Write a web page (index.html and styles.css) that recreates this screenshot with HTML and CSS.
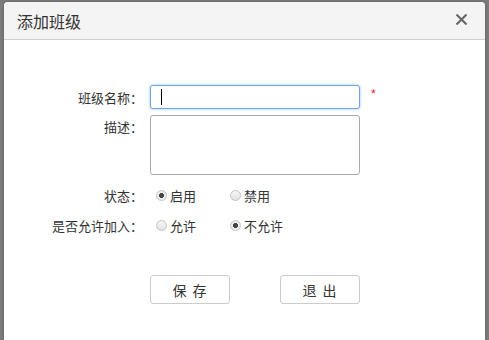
FILE: index.html
```html
<!DOCTYPE html>
<html lang="zh-CN">
<head>
    <meta charset="UTF-8">
    <title>添加班级</title>
    <link rel="stylesheet" href="styles.css">
</head>
<body>
    <div class="dialog">
        <header class="dialog-header">
            <h1>添加班级</h1>
            <span class="close">
                <svg width="11" height="11" viewBox="0 0 11 11"><path d="M1.2 1.2 L9.8 9.8 M9.8 1.2 L1.2 9.8" stroke="#666" stroke-width="2.1" stroke-linecap="square"/></svg>
            </span>
        </header>

        <form class="form">
            <div class="row">
                <label class="label" for="className">班级名称：</label>
                <div class="field caret">
                    <input type="text" id="className" class="input">
                </div>
                <span class="required">*</span>
            </div>

            <div class="row row-top">
                <label class="label" for="desc">描述：</label>
                <textarea id="desc" class="textarea"></textarea>
            </div>

            <div class="row row-radio">
                <span class="label">状态：</span>
                <label class="option"><input type="radio" name="status" checked>启用</label>
                <label class="option"><input type="radio" name="status">禁用</label>
            </div>

            <div class="row row-radio">
                <span class="label">是否允许加入：</span>
                <label class="option"><input type="radio" name="join">允许</label>
                <label class="option"><input type="radio" name="join" checked>不允许</label>
            </div>

            <div class="buttons">
                <button type="button">保 存</button>
                <button type="button">退 出</button>
            </div>
        </form>
    </div>
</body>
</html>
```

FILE: styles.css
```css
/* 页面与遮罩 */
html, body {
    height: 100%;
    overflow: hidden;
}

body {
    margin: 0;
    padding: 2px 0 0 4px;
    box-sizing: border-box;
    background-color: #7b7b7b;
    font-family: "Liberation Sans", "Noto Sans CJK SC", sans-serif;
    font-size: 13px;
    color: #333333;
}

/* 对话框 */
.dialog {
    width: 481px;
    height: 338px;
    background-color: #ffffff;
    border-radius: 4px 4px 0 0;
    box-shadow: 0 0 3px rgba(0, 0, 0, 0.3);
}

.dialog-header {
    height: 37px;
    display: flex;
    align-items: center;
    justify-content: space-between;
    padding: 0 18px 0 13px;
    background-color: #f4f4f4;
    border-bottom: 1px solid #cfcfcf;
    border-radius: 4px 4px 0 0;
}

.dialog-header h1 {
    margin: 0;
    font-size: 16px;
    font-weight: normal;
    color: #333333;
}

.close {
    display: flex;
    margin-top: -2px;
}

/* 表单 */
.form {
    padding-top: 45px;
}

.row {
    display: flex;
    align-items: center;
}

.row-top {
    align-items: flex-start;
    margin-top: 6px;
}

.row-radio {
    height: 22px;
    margin-top: 8px;
}

.row-top + .row-radio {
    margin-top: 9px;
}

.label {
    width: 139px;
    padding-right: 7px;
    text-align: right;
    white-space: nowrap;
}

.row-top .label {
    padding-top: 2px;
}

.field {
    position: relative;
}

.input {
    width: 210px;
    height: 24px;
    box-sizing: border-box;
    margin: 0;
    border: 1px solid #73a6e0;
    border-radius: 3px;
    box-shadow: 0 0 3px rgba(82, 148, 230, 0.6);
    outline: none;
    font: inherit;
}

.caret::after {
    content: "";
    position: absolute;
    left: 11px;
    top: 4px;
    width: 1px;
    height: 16px;
    background-color: #000000;
}

.required {
    margin-left: 11px;
    margin-top: -6px;
    color: #e81c1c;
    font-size: 12px;
}

.textarea {
    width: 210px;
    height: 60px;
    box-sizing: border-box;
    margin: 0;
    border: 1px solid #aaaaaa;
    border-radius: 3px;
    resize: none;
    font: inherit;
}

/* 单选 */
.option {
    display: flex;
    align-items: center;
    width: 74px;
}

.option:first-of-type {
    margin-left: 6px;
}

.option input {
    appearance: none;
    -webkit-appearance: none;
    width: 11px;
    height: 11px;
    margin: 0 3px 0 0;
    border: 1px solid #c4c4c4;
    border-radius: 50%;
    background: linear-gradient(#f6f6f6, #e2e2e2);
    box-sizing: border-box;
}

.option input:checked {
    background: radial-gradient(circle, #444444 0, #444444 2.2px, #ececec 2.8px);
}

/* 按钮 */
.buttons {
    display: flex;
    gap: 50px;
    padding-left: 146px;
    margin-top: 39px;
}

.buttons button {
    width: 80px;
    height: 29px;
    background-color: #ffffff;
    border: 1px solid #cccccc;
    border-radius: 3px;
    font: inherit;
    font-size: 14px;
    color: #333333;
    letter-spacing: 1px;
}
```
